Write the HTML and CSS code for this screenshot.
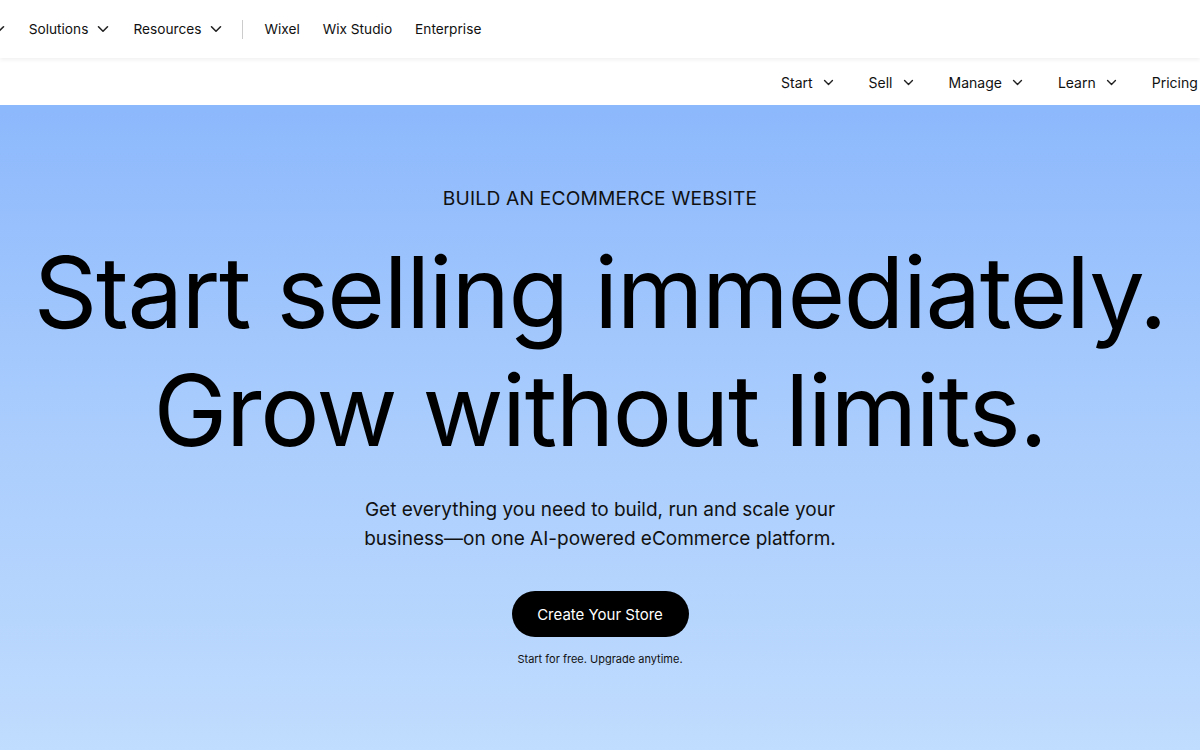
FILE: index.html
```html
<!DOCTYPE html>
<html>
<head>
<meta charset="utf-8">
<link rel="stylesheet" href="styles.css">
</head>
<body>
<header class="topbar">
  <nav class="topnav">
    <span class="item first"><span class="label">Product</span><svg class="chev" viewBox="0 0 12 8"><path d="M1.5 1.8 6 6.2 10.5 1.8"/></svg></span>
    <span class="item"><span class="label">Solutions</span><svg class="chev" viewBox="0 0 12 8"><path d="M1.5 1.8 6 6.2 10.5 1.8"/></svg></span>
    <span class="item"><span class="label">Resources</span><svg class="chev" viewBox="0 0 12 8"><path d="M1.5 1.8 6 6.2 10.5 1.8"/></svg></span>
    <span class="divider"></span>
    <span class="item plain">Wixel</span>
    <span class="item plain">Wix Studio</span>
    <span class="item plain">Enterprise</span>
  </nav>
</header>
<div class="subbar">
  <nav class="subnav">
    <span class="sitem"><span>Start</span><svg class="chev small" viewBox="0 0 12 8"><path d="M1.5 1.8 6 6.2 10.5 1.8"/></svg></span>
    <span class="sitem"><span>Sell</span><svg class="chev small" viewBox="0 0 12 8"><path d="M1.5 1.8 6 6.2 10.5 1.8"/></svg></span>
    <span class="sitem"><span>Manage</span><svg class="chev small" viewBox="0 0 12 8"><path d="M1.5 1.8 6 6.2 10.5 1.8"/></svg></span>
    <span class="sitem"><span>Learn</span><svg class="chev small" viewBox="0 0 12 8"><path d="M1.5 1.8 6 6.2 10.5 1.8"/></svg></span>
    <span class="sitem"><span>Pricing</span></span>
  </nav>
</div>
<main class="hero">
  <p class="eyebrow">BUILD AN ECOMMERCE WEBSITE</p>
  <h1 class="headline">Start selling immediately.<br>Grow without limits.</h1>
  <p class="lead">Get everything you need to build, run and scale your<br>business—on one AI-powered eCommerce platform.</p>
  <a class="cta">Create Your Store</a>
  <p class="note">Start for free. Upgrade anytime.</p>
</main>
</body>
</html>
```

FILE: styles.css
```css
* { box-sizing: border-box; }
html, body { margin: 0; padding: 0; }
body {
  width: 1200px;
  height: 750px;
  overflow: hidden;
  font-family: "Inter", "Noto Sans", sans-serif;
  color: #000;
  background: #c0dcfe;
}
.topbar {
  height: 58px;
  background: #fff;
  box-shadow: 0 2px 4px rgba(0,0,0,0.06);
  position: relative;
  z-index: 2;
  overflow: hidden;
}
.topnav {
  display: flex;
  align-items: center;
  height: 58px;
  font-size: 13.7px;
  color: #111;
}
.item {
  display: flex;
  align-items: center;
  margin-right: 24px;
}
.item.first { margin-left: -67px; }
.item .label { margin-right: 9px; }
.chev {
  width: 12px;
  height: 8px;
  fill: none;
  stroke: #222;
  stroke-width: 1.6;
  stroke-linecap: round;
  stroke-linejoin: round;
}
.chev.small { width: 11px; height: 7px; }
.divider {
  width: 1px;
  height: 19px;
  background: #ccc;
  margin: 0 21px 0 -4px;
}
.item.plain { margin-right: 23px; }
.subbar {
  height: 47px;
  background: #fff;
  padding-top: 3px;
  position: relative;
  z-index: 1;
}
.subnav {
  display: flex;
  align-items: center;
  justify-content: flex-start;
  height: 43px;
  padding-left: 781px;
  font-size: 14px;
  color: #111;
  white-space: nowrap;
}
.sitem {
  display: flex;
  align-items: center;
  margin-right: 35px;
}
.sitem span { margin-right: 10px; }
.hero {
  height: 645px;
  background: linear-gradient(180deg, #8cb8fc 0%, #a7cbfd 45%, #c0dcfe 100%);
  display: flex;
  flex-direction: column;
  align-items: center;
  text-align: center;
  padding-top: 81px;
}
.eyebrow {
  margin: 0;
  font-size: 19.2px;
  letter-spacing: 0.2px;
  line-height: 24px;
  color: #111;
}
.headline {
  margin: 23px 0 0;
  font-weight: 400;
  font-size: 99px;
  line-height: 118px;
  letter-spacing: -1.4px;
  color: #000;
}
.lead {
  margin: 26px 0 0;
  font-size: 19px;
  line-height: 29px;
  color: #111;
}
.cta {
  margin-top: 38px;
  width: 177px;
  height: 46px;
  border-radius: 23px;
  background: #000;
  color: #fff;
  font-size: 15px;
  display: flex;
  align-items: center;
  justify-content: center;
}
.note {
  margin: 15px 0 0;
  font-size: 11px;
  color: #111;
}
```
